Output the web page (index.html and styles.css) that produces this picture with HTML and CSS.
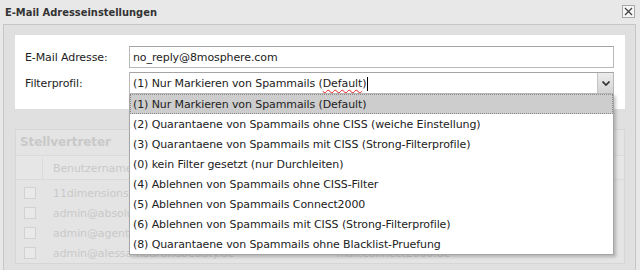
FILE: index.html
```html
<!DOCTYPE html>
<html>
  <head>
    <link rel="stylesheet" href="styles.css">
  </head>
  <body>
    <div class="dialog">
      <div class="titlebar">
        <span class="title">E-Mail Adresseinstellungen</span>
        <span class="close">
          <svg width="9" height="9" viewBox="0 0 9 9"><path d="M1 1L8 8M8 1L1 8" stroke="#444" stroke-width="1.3" fill="none"/></svg>
        </span>
      </div>
      <div class="frame">
        <div class="form">
          <div class="row">
            <label>E-Mail Adresse:</label>
            <div class="field">no_reply@8mosphere.com</div>
          </div>
          <div class="row">
            <label>Filterprofil:</label>
            <div class="field select">
              <span>(1) Nur Markieren von Spammails (<span class="typo">Default</span>)</span><span class="caret"></span>
              <span class="arrow">
                <svg width="8" height="5" viewBox="0 0 8 5"><path d="M0.5 0.5L4 4L7.5 0.5" stroke="#333" stroke-width="1.7" fill="none"/></svg>
              </span>
            </div>
            <ul class="options">
              <li class="active">(1) Nur Markieren von Spammails (Default)</li>
              <li>(2) Quarantaene von Spammails ohne CISS (weiche Einstellung)</li>
              <li>(3) Quarantaene von Spammails mit CISS (Strong-Filterprofile)</li>
              <li>(0) kein Filter gesetzt (nur Durchleiten)</li>
              <li>(4) Ablehnen von Spammails ohne CISS-Filter</li>
              <li>(5) Ablehnen von Spammails Connect2000</li>
              <li>(6) Ablehnen von Spammails mit CISS (Strong-Filterprofile)</li>
              <li>(8) Quarantaene von Spammails ohne Blacklist-Pruefung</li>
            </ul>
          </div>
        </div>
        <div class="deputies">
          <div class="dep-title">Stellvertreter</div>
          <div class="dep-head">
            <span class="col-check"></span>
            <span class="col-name">Benutzername</span>
          </div>
          <div class="dep-row first">
            <span class="col-check"><i class="box"></i></span>
            <span class="col-name">11dimensions</span>
          </div>
          <div class="dep-row">
            <span class="col-check"><i class="box"></i></span>
            <span class="col-name">admin@absolutbeauty.de</span>
          </div>
          <div class="dep-row">
            <span class="col-check"><i class="box"></i></span>
            <span class="col-name">admin@agentur-mueller.de</span>
          </div>
          <div class="dep-row">
            <span class="col-check"><i class="box"></i></span>
            <span class="col-name">admin@alessa-haarundbeauty.de</span>
            <span class="col-server">mail.connect2000.de</span>
          </div>
        </div>
      </div>
    </div>
  </body>
</html>
```

FILE: styles.css
```css
* {
  margin: 0;
  padding: 0;
  box-sizing: border-box;
}
body {
  background-color: #e8e8e8;
  font-family: "DejaVu Sans", Verdana, sans-serif;
  font-size: 11px;
  letter-spacing: -0.1px;
  color: #222;
  overflow: hidden;
}
.titlebar {
  height: 24px;
  display: flex;
  align-items: center;
  justify-content: space-between;
  padding: 0 5px 0 5px;
}
.title {
  font-family: "DejaVu Sans Condensed", "DejaVu Sans", sans-serif;
  font-stretch: condensed;
  font-weight: bold;
  letter-spacing: 0;
  color: #333;
}
.close {
  width: 13px;
  height: 13px;
  margin-top: -1px;
  border: 1px solid #a8a8a8;
  background-color: #f6f6f6;
  display: flex;
  align-items: center;
  justify-content: center;
}
.frame {
  margin: 0 4px 0 3px;
  height: 250px;
  border: 1px solid #c6c6c6;
  border-bottom: none;
  background-color: #e0e0e0;
  padding: 10px 10px 0 11px;
}
.form {
  background-color: white;
  padding: 11px 11px 15px 10px;
  display: flex;
  flex-direction: column;
  gap: 4px;
}
.row {
  display: flex;
  align-items: center;
  position: relative;
}
.row label {
  width: 104px;
}
.field {
  flex: 1;
  height: 22px;
  border: 1px solid #b9b9b9;
  border-top-color: #a4a4a4;
  padding: 1px 3px 0;
  display: flex;
  align-items: center;
  background-color: white;
}
.select {
  position: relative;
}
.typo {
  text-decoration: underline wavy #d22;
  text-decoration-thickness: 1px;
  text-underline-offset: 2px;
}
.caret {
  display: inline-block;
  width: 1px;
  height: 14px;
  background-color: #000;
  margin-left: 1px;
}
.arrow {
  position: absolute;
  right: 0;
  top: 0;
  bottom: 0;
  width: 16px;
  border-left: 1px solid #c4c4c4;
  background: linear-gradient(#ececec, #d4d4d4);
  display: flex;
  align-items: center;
  justify-content: center;
}
.options {
  position: absolute;
  left: 104px;
  right: 0;
  top: 22px;
  list-style: none;
  background-color: white;
  border: 1px solid #a6a6a6;
  border-top: none;
  box-shadow: 2px 2px 3px rgba(0, 0, 0, 0.22);
  z-index: 5;
}
.options li {
  height: 20px;
  line-height: 20px;
  padding: 2px 0 0 3px;
  line-height: 18px;
  white-space: nowrap;
}
.options li.active {
  background-color: #cdcdcd;
  outline: 1px dotted #8a8a8a;
  outline-offset: -1px;
}
.deputies {
  margin-top: 20px;
  border: 1px solid #d6d6d6;
  background-color: #e4e4e4;
  color: #c9c9c9;
}
.dep-title {
  height: 25px;
  line-height: 25px;
  padding-left: 4px;
  font-weight: bold;
  font-size: 12px;
}
.dep-head,
.dep-row {
  display: flex;
  align-items: center;
}
.dep-head {
  height: 25px;
  padding-top: 2px;
  background-color: #e6e6e6;
  border-top: 1px solid #dadada;
  border-bottom: 1px solid #dadada;
}
.dep-row {
  height: 20px;
}
.dep-row.first {
  margin-top: 3px;
}
.col-check {
  width: 27px;
  align-self: stretch;
  display: flex;
  align-items: center;
  justify-content: center;
}
.dep-head .col-check {
  border-right: 1px solid #dadada;
}
.col-name {
  width: 283px;
  padding-left: 10px;
  white-space: nowrap;
  overflow: hidden;
}
.col-server {
  padding-left: 10px;
  white-space: nowrap;
}
.box {
  display: block;
  width: 12px;
  height: 12px;
  border: 1px solid #d2d2d2;
  background-color: #e9e9e9;
}
```
